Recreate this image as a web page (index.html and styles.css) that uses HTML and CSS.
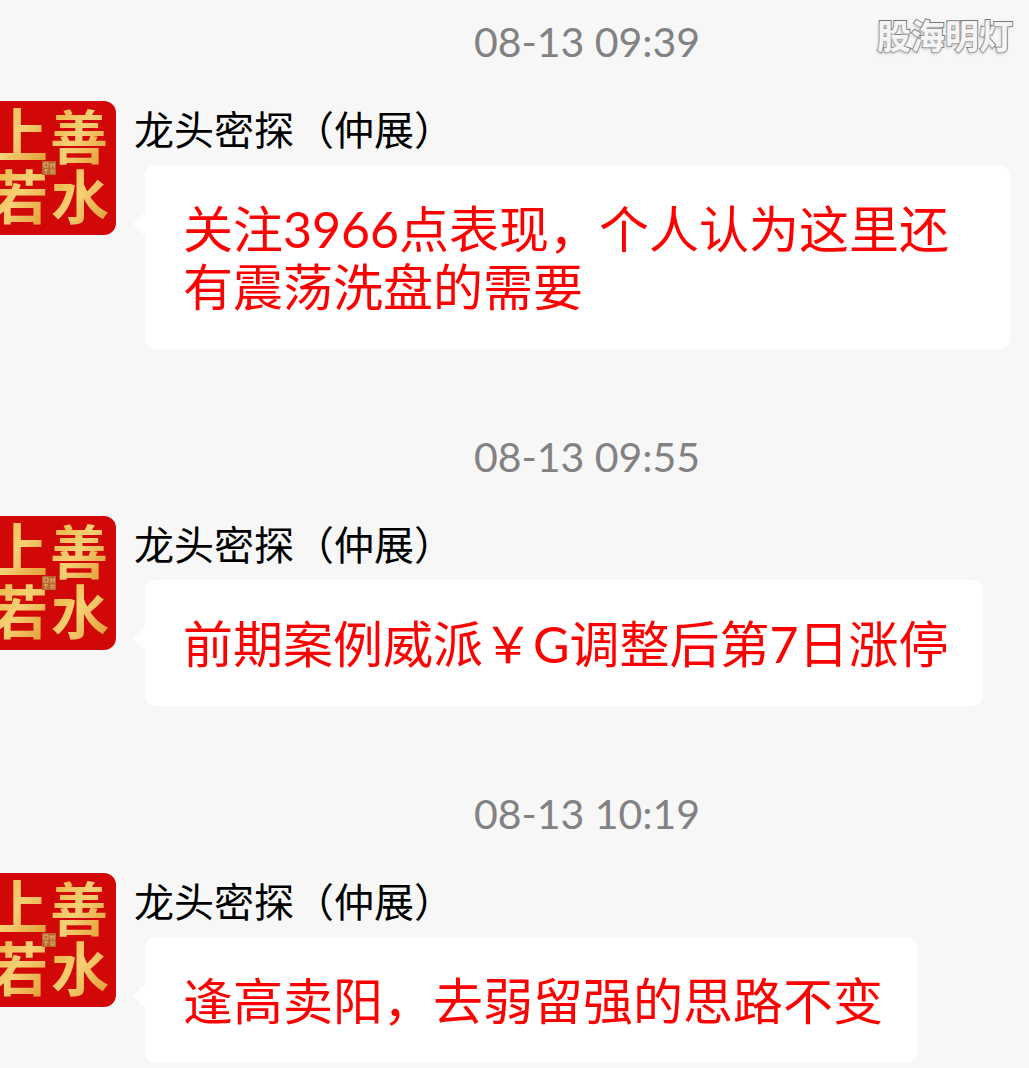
FILE: index.html
```
<!DOCTYPE html>
<html lang="zh-CN">
<head>
    <meta charset="UTF-8">
    <meta name="viewport" content="width=device-width, initial-scale=1.0">
    <title>股海明灯</title>
    <link rel="stylesheet" href="styles.css">
</head>
<body>

    <!-- shared avatar -->
    <svg class="defs" width="0" height="0" aria-hidden="true">
        <defs>
            <linearGradient id="gold" x1="0" y1="0" x2="1" y2="1">
                <stop offset="0" stop-color="#eba832"/>
                <stop offset="0.5" stop-color="#f6d074"/>
                <stop offset="1" stop-color="#dd9126"/>
            </linearGradient>
            <symbol id="avatar" viewBox="0 0 116 134">
                <rect width="116" height="134" fill="#d20707"/>
                <g class="avatar-text" fill="url(#gold)">
                    <text x="-10" y="56">上</text>
                    <text x="50" y="58">善</text>
                    <text x="-10" y="118">若</text>
                    <text x="51" y="118">水</text>
                </g>
                <rect x="42" y="60" width="14" height="14" fill="#b5682f"/>
                <path d="M44 62h4v4h-4zM51 62v5M54 62v5M50 64h5M44 69h4M46 68v5M51 69h3v3h-3z" fill="none" stroke="#e3b06c"/>
            </symbol>
        </defs>
    </svg>

    <div class="watermark">股海明灯</div>

    <main class="chat">
        <section class="group">
            <time class="date">08-13 09:39</time>
            <div class="message">
                <svg class="avatar" role="img" aria-label="上善若水"><use href="#avatar"/></svg>
                <div class="content">
                    <div class="name">龙头密探（仲展）</div>
                    <p class="bubble">关注3966点表现，个人认为这里还有震荡洗盘的需要</p>
                </div>
            </div>
        </section>

        <section class="group">
            <time class="date">08-13 09:55</time>
            <div class="message">
                <svg class="avatar" role="img" aria-label="上善若水"><use href="#avatar"/></svg>
                <div class="content">
                    <div class="name">龙头密探（仲展）</div>
                    <p class="bubble">前期案例威派￥G调整后第7日涨停</p>
                </div>
            </div>
        </section>

        <section class="group">
            <time class="date">08-13 10:19</time>
            <div class="message">
                <svg class="avatar" role="img" aria-label="上善若水"><use href="#avatar"/></svg>
                <div class="content">
                    <div class="name">龙头密探（仲展）</div>
                    <p class="bubble">逢高卖阳，去弱留强的思路不变</p>
                </div>
            </div>
        </section>
    </main>

</body>
</html>
```

FILE: styles.css
```
body {
    margin: 0;
    background-color: #f7f7f7;
    font-family: Lato, "Noto Sans CJK SC", sans-serif;
    color: #000;
}

.defs {
    position: absolute;
}

.watermark {
    position: absolute;
    top: 12px;
    right: 16px;
    font-size: 34px;
    line-height: 48px;
    font-weight: bold;
    color: #f5f5f5;
    -webkit-text-stroke: 2px #777;
    paint-order: stroke fill;
    text-shadow: -1px 2px 3px #bbb;
}

.group {
    padding-bottom: 66px;
}

.group:last-child {
    padding-bottom: 5px;
}

.date {
    display: block;
    margin-left: 145px;
    margin-bottom: 17px;
    font-size: 41px;
    line-height: 84px;
    text-align: center;
    color: #828282;
}

.message {
    display: flex;
    align-items: flex-start;
}

.avatar {
    flex: none;
    width: 116px;
    height: 134px;
    border-radius: 0 12px 12px 0;
}

.avatar-text {
    font-family: "Noto Sans CJK SC", sans-serif;
    font-size: 58px;
    font-weight: bold;
}

.content {
    flex: 1;
    min-width: 0;
    padding-left: 18px;
    padding-right: 19px;
}

.name {
    font-size: 40px;
    line-height: 58px;
    margin-bottom: 6px;
}

.bubble {
    position: relative;
    width: fit-content;
    box-sizing: border-box;
    margin: 0 0 0 11px;
    padding: 35px 34px 33px 38px;
    border-radius: 10px;
    background-color: #fff;
    font-size: 50px;
    line-height: 58px;
    color: #f00;
}

.bubble::before {
    content: "";
    position: absolute;
    top: 47px;
    left: -12px;
    border: 12px solid transparent;
    border-left-width: 0;
    border-right-color: #fff;
}
```
